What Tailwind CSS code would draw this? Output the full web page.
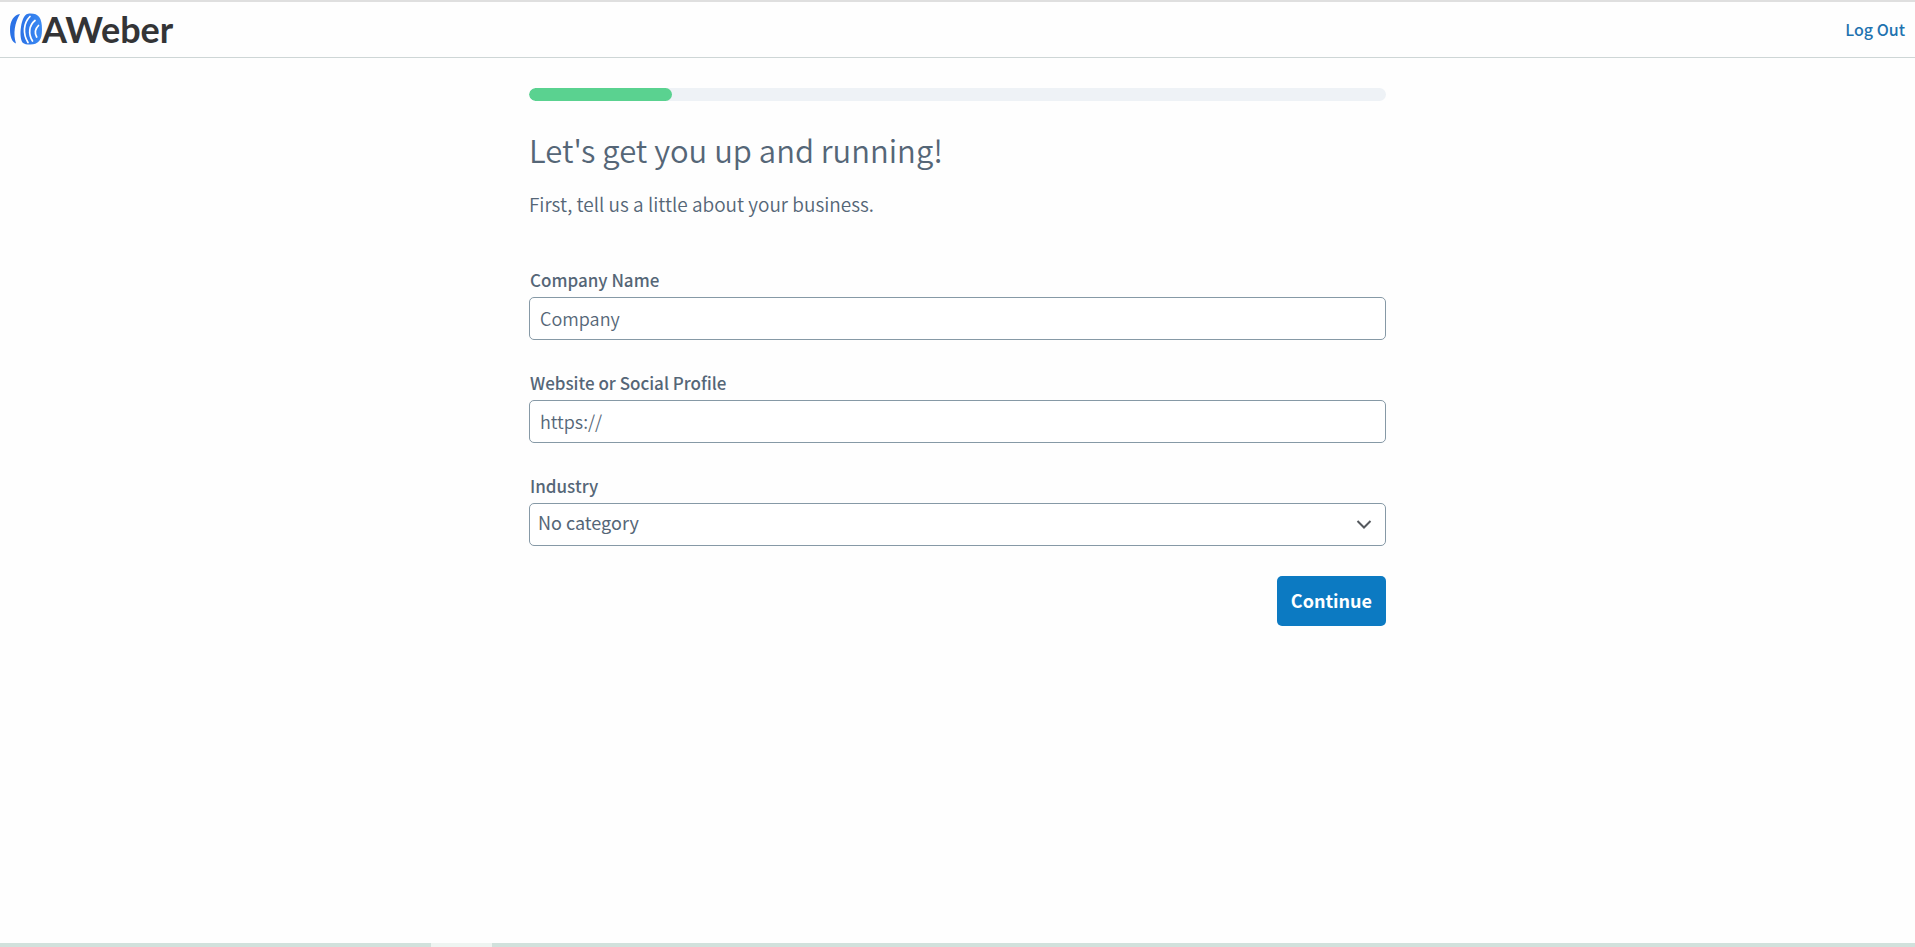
<!DOCTYPE html>
<html lang="en">
<head>
  <meta charset="UTF-8" />
  <meta name="viewport" content="width=device-width, initial-scale=1.0" />
  <title>AWeber</title>
  <script src="https://cdn.jsdelivr.net/npm/@tailwindcss/browser@4"></script>
</head>
<body class="flex min-h-screen flex-col border-t-2 border-[#dfdfdf] bg-[#fefefe] font-['Noto_Sans_CJK_SC',sans-serif] text-[#556677]">

  <!-- Header -->
  <header class="flex h-14 items-center justify-between border-b border-[#ced6d6] px-2.5 pb-0.5">
    <a href="#" class="flex items-center" aria-label="AWeber home">
      <svg class="h-8 w-8" viewBox="0 0 32 32" fill="none">
        <defs>
          <linearGradient id="mark" x1="0" y1="0" x2="1" y2="0">
            <stop offset="0" stop-color="#2b72e6" />
            <stop offset="1" stop-color="#3b8bf4" />
          </linearGradient>
        </defs>
        <path d="M10 1C4 1.500 0 8 0 16.500c0 7.500 2 12.500 6 14C3 21 4.500 10 10 1z" fill="#2b72e6" />
        <path d="M20.500 .5c4 0 7 1 8.700 3.500 2 2.800 2.800 7 2.800 12.500s-.9 9.300-2.800 11.500c-2 2.500-5 3.500-9 3.500-3.500 0-6-.5-7.500-1.800C10.500 27 10 20 11 14 12 7.500 14 3 16.500 1.300 17.500.7 18.500 .5 20.500 .5z" fill="url(#mark)" />
        <path d="M20 3.500c-6.500 6.500-7.500 17-2 26M25 7.500c-6 5-7 13-2.500 20.500M28.500 12.500c-3.500 3.500-4 7.500-1.800 11.500" stroke="#fff" stroke-width="1.700" stroke-linecap="round" />
      </svg>
      <span class="font-['Lato',sans-serif] text-[36px] leading-10 font-bold text-[#333436]">AWeber</span>
    </a>
    <a href="#" class="text-[16px] leading-6 font-medium text-[#1f73b0]">Log Out</a>
  </header>

  <!-- Onboarding step -->
  <main class="mx-auto w-full max-w-[857px] grow pt-[30px]">
    <div class="h-[13px] overflow-hidden rounded-full bg-[#eef2f6]" role="progressbar" aria-label="Setup progress" aria-valuemin="0" aria-valuemax="6" aria-valuenow="1">
      <div class="h-full w-1/6 rounded-full bg-[#5ad290]"></div>
    </div>

    <h1 class="mt-[25px] text-[31px] leading-12 font-[350]">Let's get you up and running!</h1>
    <p class="mt-3.5 text-[19px] leading-8 font-[350]">First, tell us a little about your business.</p>

    <form class="mt-[46px]">
      <div>
        <label for="company" class="block pl-px text-[17px] leading-7 font-medium">Company Name</label>
        <input type="text" id="company" name="company" placeholder="Company"
               class="mt-[3px] block h-[43px] w-full rounded-[5px] border border-[#8699a6] bg-white px-2.5 pb-0.5 text-[18px] font-[350] placeholder:text-[#556677]">
      </div>

      <div class="mt-[29px]">
        <label for="website" class="block pl-px text-[17px] leading-7 font-medium">Website or Social Profile</label>
        <input type="text" id="website" name="website" placeholder="https://"
               class="mt-[3px] block h-[43px] w-full rounded-[5px] border border-[#8699a6] bg-white px-2.5 pb-0.5 text-[18px] font-[350] placeholder:text-[#556677]">
      </div>

      <div class="mt-[29px]">
        <label for="industry" class="block pl-px text-[17px] leading-7 font-medium">Industry</label>
        <div class="relative mt-[3px]">
          <select id="industry" name="industry"
                  class="block h-[43px] w-full appearance-none rounded-[5px] border border-[#8699a6] bg-white px-2 pb-1 text-[18px]">
            <option>No category</option>
          </select>
          <svg class="pointer-events-none absolute top-4 right-3.5 h-3 w-4" viewBox="0 0 16 12" fill="none" stroke="#55595e" stroke-width="2">
            <path d="M1.500 2l6.500 6.500L14.500 2" />
          </svg>
        </div>
      </div>

      <div class="mt-[30px] flex justify-end">
        <button type="submit" class="h-[50px] rounded-[5px] bg-[#0c7ac2] px-3.5 pb-0.5 text-[18px] font-bold text-white">Continue</button>
      </div>
    </form>
  </main>

  <!-- Bottom strip -->
  <footer class="flex h-1 bg-[#d1e1dc]">
    <div class="ml-[431px] w-[61px] bg-[#eef4f1]"></div>
  </footer>
</body>
</html>
